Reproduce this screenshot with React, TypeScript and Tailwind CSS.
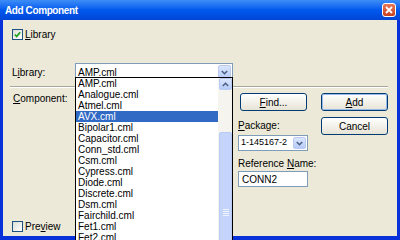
import type { ReactNode } from "react";

const LIBRARIES = [
  "AMP.cml",
  "Analogue.cml",
  "Atmel.cml",
  "AVX.cml",
  "Bipolar1.cml",
  "Capacitor.cml",
  "Conn_std.cml",
  "Csm.cml",
  "Cypress.cml",
  "Diode.cml",
  "Discrete.cml",
  "Dsm.cml",
  "Fairchild.cml",
  "Fet1.cml",
  "Fet2.cml",
];

function Chevron({ up = false }: { up?: boolean }) {
  return (
    <svg width="7" height="5" viewBox="0 0 7 5" className={up ? "rotate-180" : ""}>
      <path d="M0.8 1 L3.5 3.7 L6.2 1" fill="none" stroke="#4d6185" strokeWidth="1.6" />
    </svg>
  );
}

function DropButton() {
  return (
    <div className="flex h-full w-[13px] shrink-0 items-center justify-center rounded-[2px] border border-[#b9cbf3] bg-gradient-to-b from-[#dbe6fd] to-[#b7cbf8]">
      <Chevron />
    </div>
  );
}

function Checkbox({ checked, children }: { checked: boolean; children: ReactNode }) {
  return (
    <div className="flex items-center gap-[2px]">
      <div className="flex h-[11px] w-[11px] items-center justify-center border border-[#1c5180] bg-gradient-to-br from-[#dcdcd7] to-white">
        {checked && (
          <svg width="7" height="7" viewBox="0 0 7 7">
            <path d="M0.8 3.5 L2.7 5.4 L6.2 1.2" fill="none" stroke="#21a121" strokeWidth="1.7" />
          </svg>
        )}
      </div>
      <span>{children}</span>
    </div>
  );
}

function XpButton({ children, isDefault = false }: { children: ReactNode; isDefault?: boolean }) {
  return (
    <div className="flex h-[18px] w-[67px] items-center justify-center rounded-[3px] border border-[#003c74] bg-gradient-to-b from-white to-[#e6e3d6]">
      <div
        className={`flex h-full w-full items-center justify-center rounded-[2px] ${
          isDefault ? "border border-[#98b8ea]" : ""
        }`}
      >
        {children}
      </div>
    </div>
  );
}

export default function App() {
  return (
    <div
      className="relative flex h-[240px] w-[400px] flex-col overflow-hidden bg-[#0831d9] text-[10px] text-black"
      style={{ fontFamily: '"Liberation Sans", Arial, sans-serif' }}
    >
      {/* title bar */}
      <div className="flex h-[20px] items-center justify-between bg-gradient-to-b from-[#3d8df7] via-[#0058ee] to-[#0046d6] pl-[5px] pr-[4px]">
        <span className="text-[10px] font-bold tracking-[-0.4px] text-white">Add Component</span>
        <div className="flex h-[14px] w-[14px] items-center justify-center rounded-[3px] border border-white bg-gradient-to-b from-[#e77756] to-[#c8401e]">
          <svg width="8" height="8" viewBox="0 0 8 8">
            <path d="M1 1 L7 7 M7 1 L1 7" stroke="white" strokeWidth="1.8" />
          </svg>
        </div>
      </div>

      {/* body */}
      <div className="mx-[3px] mb-[4px] flex flex-1 flex-col bg-[#ece9d8]">
        <div className="pl-[9px] pt-[7px]">
          <Checkbox checked>
            <span className="underline">L</span>ibrary
          </Checkbox>
        </div>

        <div className="mt-[21px] flex items-center pl-[9px]">
          <span className="w-[63px]">
            L<span className="underline">i</span>brary:
          </span>
          <div className="flex h-[18px] w-[158px] items-center justify-between border border-[#7f9db9] bg-white py-[1px] pl-[2px] pr-[1px]">
            <span>AMP.cml</span>
            <DropButton />
          </div>
        </div>

        <div className="ml-[7px] mr-[9px] mt-[5px] border-b border-t border-b-white border-t-[#aca899]" />

        <div className="mt-[5px] flex flex-1 pb-[2px]">
          <div className="flex w-[72px] flex-col justify-between pl-[10px]">
            <span className="leading-[12px]">
              <span className="underline">C</span>omponent:
            </span>
            <div className="-ml-[1px]">
              <Checkbox checked={false}>
                Pre<span className="underline">v</span>iew
              </Checkbox>
            </div>
          </div>
          <div className="w-[163px]" />
          <div className="flex gap-[13px]">
            <div className="flex w-[70px] flex-col">
              <div className="ml-[2px]">
                <XpButton>
                  <span className="underline">F</span>ind...
                </XpButton>
              </div>
              <span className="mt-[9px] leading-[12px]">
                <span className="underline">P</span>ackage:
              </span>
              <div className="mt-[3px] flex h-[16px] w-[70px] items-center justify-between border border-[#7f9db9] bg-white py-[1px] pl-[2px] pr-[1px]">
                <span className="text-[9px]">1-145167-2</span>
                <DropButton />
              </div>
              <span className="mt-[7px] whitespace-nowrap leading-[12px]">
                Reference <span className="underline">N</span>ame:
              </span>
              <div className="mt-[1px] flex h-[16px] w-[70px] items-center border border-[#7f9db9] bg-white pl-[3px]">
                CONN2
              </div>
            </div>
            <div className="flex flex-col gap-[6px]">
              <XpButton isDefault>
                <span className="underline">A</span>dd
              </XpButton>
              <XpButton>Cancel</XpButton>
            </div>
          </div>
        </div>
      </div>

      {/* open dropdown list */}
      <div className="absolute left-[75px] top-[77px] flex h-[175px] w-[158px] border border-black bg-white">
        <div className="flex-1">
          {LIBRARIES.map((name) => (
            <div
              key={name}
              className={`h-[11px] pl-[2px] leading-[11px] ${
                name === "AVX.cml" ? "bg-[#316ac5] text-white" : ""
              }`}
            >
              {name}
            </div>
          ))}
        </div>
        <div className="flex w-[14px] flex-col bg-[#f5f4ef] pl-[1px]">
          <div className="flex h-[12px] items-center justify-center rounded-[2px] border border-[#b9cbf3] bg-gradient-to-b from-[#dbe6fd] to-[#b7cbf8]">
            <Chevron up />
          </div>
          <div className="h-[42px]" />
          <div className="flex flex-1 items-start justify-center rounded-[2px] border border-[#b9cbf3] bg-[#c4d4fb] pt-[76px]">
            <div className="flex w-[6px] flex-col gap-[1px]">
              <div className="h-px bg-[#eef3fe]" />
              <div className="h-px bg-[#eef3fe]" />
              <div className="h-px bg-[#eef3fe]" />
              <div className="h-px bg-[#eef3fe]" />
            </div>
          </div>
        </div>
      </div>
    </div>
  );
}
